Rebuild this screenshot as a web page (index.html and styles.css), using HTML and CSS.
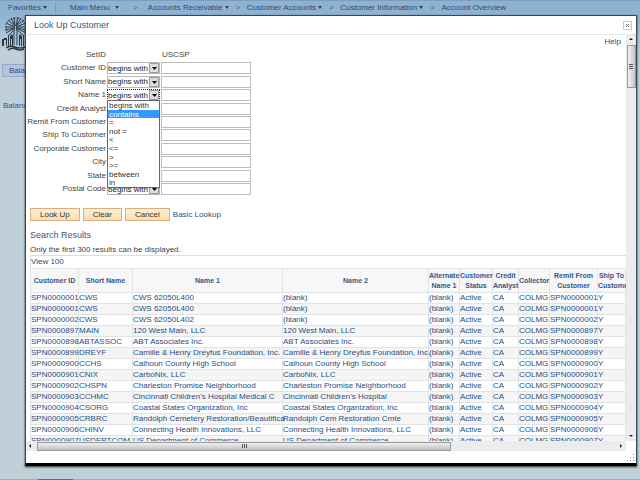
FILE: index.html
```
<!DOCTYPE html>
<html lang="en">
<head>
    <meta charset="UTF-8">
    <meta name="viewport" content="width=device-width, initial-scale=1.0">
    <title>Look Up Customer</title>
    <link rel="stylesheet" href="styles.css">
</head>
<body>
    <nav class="breadcrumbs">
        <a class="crumb favorites" href="#">Favorites <span class="caret"></span></a>
        <a class="crumb main-menu" href="#">Main Menu <span class="caret"></span></a>
        <span class="sep">&gt;</span>
        <a class="crumb" href="#">Accounts Receivable <span class="caret"></span></a>
        <span class="sep">&gt;</span>
        <a class="crumb" href="#">Customer Accounts <span class="caret"></span></a>
        <span class="sep">&gt;</span>
        <a class="crumb" href="#">Customer Information <span class="caret"></span></a>
        <span class="sep">&gt;</span>
        <a class="crumb" href="#">Account Overview</a>
    </nav>

    <div class="page-header">
        <svg class="logo" viewBox="0 0 28 36" aria-label="Logo">
            <g fill="none" stroke="#2b3947">
                <path d="M13 12L4 17M13 12L3 14M13 11L3 11M13 11L4 7M13 10L6 4M13 10L9 2M13 10L12 1M14 10L16 1M14 10L19 2M14 10L22 4M14 11L24 7M14 11L25 11M14 12L25 14M14 12L24 17M13 13L7 19M14 13L21 19"/>
                <path stroke-dasharray="1 1" d="M5 15Q1 5 10 3Q18 0 22 6Q26 11 22 16"/>
                <path d="M12 14V29M15 14V29"/>
                <path d="M4 32Q8 29 13 31T23 31M6 34Q10 31 14 33T22 33" stroke-width="1.5"/>
            </g>
            <path fill="#2b3947" d="M0 23h2v-1h3v8H4v-6H2v6H0zM6 19h1v11H6zM8 20l2-2 1 2v10h-1v-7H9v7H8zM17 20l1-2 2 2v10h-1v-7h-1v7h-1zM21 19h1v11h-1zM23 22h3v8h-1v-6h-1v6h-1z"/>
        </svg>
    </div>
    <a class="page-tab" href="#">Balances</a>
    <p class="page-label">Balance Group</p>
    <div class="page-footer"><span></span></div>

    <section class="modal" role="dialog" aria-labelledby="modalTitle">
        <header class="modal-header">
            <h1 id="modalTitle">Look Up Customer</h1>
            <button type="button" class="close" aria-label="Close"><svg viewBox="0 0 7 7"><path d="M2 2L5 5M5 2L2 5"/></svg></button>
        </header>

        <div class="modal-body">
            <div class="content">
                <a class="help" href="#">Help</a>

                <form class="lookup">
                    <div class="row">
                        <span class="name">SetID</span>
                        <span class="value">USCSP</span>
                    </div>
                    <div class="row">
                        <label for="customerId">Customer ID</label>
                        <select aria-label="Customer ID operator"><option>begins with</option></select>
                        <input type="text" id="customerId">
                    </div>
                    <div class="row">
                        <label for="shortName">Short Name</label>
                        <select aria-label="Short Name operator"><option>begins with</option></select>
                        <input type="text" id="shortName">
                    </div>
                    <div class="row">
                        <label for="name1">Name 1</label>
                        <div class="picker">
                            <select class="open" aria-label="Name 1 operator"><option>begins with</option></select>
                            <ul class="options">
                                <li>begins with</li>
                                <li class="active">contains</li>
                                <li>=</li>
                                <li>not =</li>
                                <li>&lt;</li>
                                <li>&lt;=</li>
                                <li>&gt;</li>
                                <li>&gt;=</li>
                                <li>between</li>
                                <li>in</li>
                            </ul>
                        </div>
                        <input type="text" id="name1">
                    </div>
                    <div class="row">
                        <label for="creditAnalyst">Credit Analyst</label>
                        <select aria-label="Credit Analyst operator"><option></option></select>
                        <input type="text" id="creditAnalyst">
                    </div>
                    <div class="row">
                        <label for="remitFrom">Remit From Customer</label>
                        <select aria-label="Remit From operator"><option></option></select>
                        <input type="text" id="remitFrom">
                    </div>
                    <div class="row">
                        <label for="shipTo">Ship To Customer</label>
                        <select aria-label="Ship To operator"><option></option></select>
                        <input type="text" id="shipTo">
                    </div>
                    <div class="row">
                        <label for="corporate">Corporate Customer</label>
                        <select aria-label="Corporate operator"><option></option></select>
                        <input type="text" id="corporate">
                    </div>
                    <div class="row">
                        <label for="city">City</label>
                        <select aria-label="City operator"><option></option></select>
                        <input type="text" id="city">
                    </div>
                    <div class="row">
                        <label for="state">State</label>
                        <select aria-label="State operator"><option></option></select>
                        <input type="text" id="state">
                    </div>
                    <div class="row">
                        <label for="postal">Postal Code</label>
                        <select aria-label="Postal Code operator"><option>begins with</option></select>
                        <input type="text" id="postal">
                    </div>
                </form>

                <div class="button-group">
                    <button type="button" class="btn">Look Up</button>
                    <button type="button" class="btn">Clear</button>
                    <button type="button" class="btn">Cancel</button>
                    <a href="#">Basic Lookup</a>
                </div>

                <h2>Search Results</h2>
                <p class="note">Only the first 300 results can be displayed.</p>
                <div class="view"><a href="#">View 100</a></div>

                <table class="results">
                    <colgroup>
                        <col class="c-id"><col class="c-short"><col class="c-name1"><col class="c-name2"><col class="c-alt">
                        <col class="c-status"><col class="c-credit"><col class="c-collector"><col class="c-remit"><col class="c-ship">
                    </colgroup>
                    <thead>
                        <tr><th>Customer ID</th><th>Short Name</th><th>Name 1</th><th>Name 2</th><th>Alternate<br>Name 1</th><th>Customer<br>Status</th><th>Credit<br>Analyst</th><th>Collector</th><th>Remit From<br>Customer</th><th>Ship To<br>Customer</th></tr>
                    </thead>
                    <tbody id="rows"></tbody>
                </table>
            </div>

            <div class="vscroll">
                <span class="arrow up"></span>
                <span class="thumb"></span>
                <span class="arrow down"></span>
            </div>
            <div class="hscroll">
                <span class="arrow left"></span>
                <span class="thumb"></span>
                <span class="arrow right"></span>
            </div>
        </div>
        <footer class="modal-footer">
            <svg class="grip" viewBox="0 0 8 8"><path d="M6 0h1v1h-1zM3 3h1v1h-1zM6 3h1v1h-1zM0 6h1v1h-1zM3 6h1v1h-1zM6 6h1v1h-1z"/></svg>
        </footer>
    </section>

    <script src="script.js"></script>
</body>
</html>
```
FILE: styles.css
```
* {
    box-sizing: border-box;
}
body {
    margin: 0;
    height: 100vh;
    overflow: hidden;
    position: relative;
    display: flex;
    flex-direction: column;
    font-family: "Liberation Sans", Arial, sans-serif;
    font-size: 8px;
    line-height: 10px;
    background-color: #bfd0d9;
    color: #444;
}
a {
    color: #1d4f86;
    text-decoration: none;
}
h1, h2, p, ul {
    margin: 0;
    padding: 0;
    font-weight: normal;
}

/* page behind the dialog */
.breadcrumbs {
    display: flex;
    align-items: center;
    height: 14px;
    flex: none;
    background-color: #8fb2d1;
    border-top: 1px solid #7b9fc2;
}
.crumb {
    color: #2f4a72;
    white-space: nowrap;
}
.favorites {
    width: 56px;
    padding-left: 8px;
    border-right: 1px solid #7799ba;
}
.main-menu {
    padding-left: 14px;
}
.caret {
    display: inline-block;
    border: 2px solid transparent;
    border-top: 3px solid #2f4157;
    border-bottom: 0;
    vertical-align: 1px;
}
.main-menu .caret {
    margin-left: 3px;
}
.sep {
    width: 18px;
    text-align: center;
    color: #40618a;
}
.main-menu + .sep {
    width: 29px;
    padding-left: 4px;
}
.page-header {
    height: 38px;
    flex: none;
    padding: 2px 0 0 2px;
    background: linear-gradient(#8fb2d1, #bfd0d9);
}
.logo {
    display: block;
    width: 28px;
    height: 36px;
}
.page-tab {
    margin: 12px 0 0 2px;
    height: 13px;
    width: 60px;
    padding: 1px 6px;
    border: 1px solid #98a9c5;
    background-color: #b4c4dc;
    color: #2a4a80;
}
.page-label {
    margin: 24px 0 0 3px;
    color: #1f5590;
}
.page-footer {
    margin-top: auto;
    height: 1px;
    padding-left: 38px;
    background-color: #9fa9b8;
}
.page-footer span {
    display: block;
    width: 35px;
    height: 1px;
    background-color: #5c6a80;
}

/* lookup dialog */
.modal {
    position: absolute;
    inset: 15px 3px 14px 25px;
    display: flex;
    flex-direction: column;
    background-color: #fff;
    border: 1px solid #3c4650;
    border-bottom: 3px solid #000;
    box-shadow: 0 1px 2px #222;
}
.modal-header {
    display: flex;
    align-items: center;
    justify-content: space-between;
    height: 19px;
    flex: none;
    padding: 0 4px 0 8px;
    border-bottom: 1px solid #dfe7e7;
}
h1, h2 {
    font-size: 9px;
    line-height: 12px;
    color: #35568c;
}
.close {
    width: 9px;
    height: 9px;
    padding: 0;
    border: 1px solid #c4cad0;
    background-color: #fff;
}
.close svg {
    display: block;
    width: 7px;
    height: 7px;
}
.close path {
    stroke: #66768a;
    fill: none;
}
.modal-body {
    flex: 1;
    min-height: 0;
    display: grid;
    grid-template-columns: 1fr 10px;
    grid-template-rows: 1fr 10px;
}
.content {
    overflow: hidden;
    padding-left: 4px;
}
.help {
    display: block;
    padding: 1px 5px 0 0;
    text-align: right;
    line-height: 11px;
}
.lookup {
    display: flex;
    flex-direction: column;
    height: 148px;
    margin-top: 1px;
}
.row {
    flex: 1;
    display: flex;
    align-items: center;
}
.row label,
.row .name {
    display: flex;
    justify-content: flex-end;
    width: 76px;
    white-space: nowrap;
}
.row .value {
    margin-left: 56px;
}
.row select {
    appearance: none;
    display: block;
    width: 53px;
    height: 12px;
    margin-left: 1px;
    padding: 0;
    border: 1px solid #b8b8b8;
    border-radius: 0;
    font: 8px "Liberation Sans", Arial, sans-serif;
    color: #222;
    background: #fff url("data:image/svg+xml,%3Csvg xmlns='http://www.w3.org/2000/svg' width='10' height='10'%3E%3Cpath fill='%23ddd' stroke='%23999' d='M.5 .5h9v9h-9z'/%3E%3Cpath d='M3 4h5L5.5 7z'/%3E%3C/svg%3E") right center no-repeat;
}
.row input {
    width: 90px;
    height: 12px;
    margin-left: 1px;
    padding: 0 2px;
    border: 1px solid #bdbdbd;
    font: 8px "Liberation Sans", Arial, sans-serif;
}
.picker {
    position: relative;
}
.row select.open {
    border: 1px dotted #222;
}
.options {
    position: absolute;
    top: 11px;
    left: 1px;
    display: flex;
    flex-direction: column;
    width: 53px;
    height: 88px;
    list-style: none;
    border: 1px solid #667;
    background-color: #fff;
    color: #333;
}
.options li {
    flex: 1;
    min-height: 0;
    padding-left: 1px;
    line-height: 9px;
}
.options .active {
    background-color: #3399ff;
    color: #fff;
}
.button-group {
    display: flex;
    align-items: center;
    gap: 3px;
    margin-top: 12px;
}
.btn {
    height: 13px;
    padding: 0 9px;
    border: 1px solid #dcae84;
    background: linear-gradient(#fdf0d4, #f7dfb0);
    font: 8px "Liberation Sans", Arial, sans-serif;
    color: #333;
}
h2 {
    margin-top: 8px;
}
.note {
    margin-top: 4px;
}
.view {
    height: 13px;
    padding-top: 1px;
    border: 1px solid #ddd;
    border-width: 1px 0 0 1px;
}
.results {
    table-layout: fixed;
    width: 100%;
    border-collapse: collapse;
    color: #1d4f86;
}
.results th,
.results td {
    padding: 0;
    border: 1px solid #e3e3e3;
    white-space: nowrap;
}
.results th {
    height: 24px;
    background-color: #f7f7f7;
    font-size: 7px;
    color: #35568c;
}
.results td {
    height: 11px;
    line-height: 10px;
}
.results tr:nth-child(even) td {
    background-color: #f5f5f5;
}
.c-id { width: 48px; }
.c-short { width: 54px; }
.c-name1 { width: 150px; }
.c-alt { width: 31px; }
.c-status { width: 33px; }
.c-credit { width: 26px; }
.c-collector { width: 31px; }
.c-remit { width: 48px; }
.c-ship { width: 28px; }

/* scroll bars */
.vscroll,
.hscroll {
    display: flex;
    align-items: center;
    background-color: #ececec;
}
.vscroll {
    flex-direction: column;
}
.vscroll .thumb {
    width: 9px;
    height: 43px;
    margin-top: 5px;
    border: 1px solid #999;
    background: repeating-linear-gradient(#555 0 1px, #ddd 1px 2px) center / 4px 5px no-repeat, linear-gradient(90deg, #f2f2f2, #c4c4c4);
}
.hscroll .thumb {
    width: 69%;
    height: 9px;
    margin-left: 6px;
    border: 1px solid #999;
    background: repeating-linear-gradient(90deg, #555 0 1px, #ddd 1px 2px) center / 5px 4px no-repeat, linear-gradient(#f0f0f0, #c0c0c0);
}
.arrow {
    border: 2px solid transparent;
}
.up {
    margin-top: 3px;
    border-top: 0;
    border-bottom-color: #222;
}
.down {
    margin: auto 0 4px;
    border-bottom: 0;
    border-top-color: #222;
}
.left {
    margin-left: 3px;
    border-left: 0;
    border-right-color: #222;
}
.right {
    margin: 0 4px 0 auto;
    border-right: 0;
    border-left-color: #222;
}
.modal-footer {
    height: 12px;
    flex: none;
    display: flex;
    align-items: flex-end;
    justify-content: flex-end;
    padding: 1px;
}
.grip {
    width: 8px;
    height: 8px;
    fill: #888;
}
```
FILE: script.js
```
const rows = [
    ['SPN0000001', 'CWS', 'CWS 62050L400', '(blank)'],
    ['SPN0000001', 'CWS', 'CWS 62050L400', '(blank)'],
    ['SPN0000002', 'CWS', 'CWS 62050L402', '(blank)'],
    ['SPN0000897', 'MAIN', '120 West Main, LLC', '120 West Main, LLC'],
    ['SPN0000898', 'ABTASSOC', 'ABT Associates Inc.', 'ABT Associates Inc.'],
    ['SPN0000899', 'DREYF', 'Camille & Henry Dreyfus Foundation, Inc.', 'Camille & Henry Dreyfus Foundation, Inc.'],
    ['SPN0000900', 'CCHS', 'Calhoun County High School', 'Calhoun County High School'],
    ['SPN0000901', 'CNIX', 'CarboNix, LLC', 'CarboNix, LLC'],
    ['SPN0000902', 'CHSPN', 'Charleston Promise Neighborhood', 'Charleston Promise Neighborhood'],
    ['SPN0000903', 'CCHMC', 'Cincinnati Children\'s Hospital Medical C', 'Cincinnati Children\'s Hospital'],
    ['SPN0000904', 'CSORG', 'Coastal States Organization, Inc', 'Coastal States Organization, Inc'],
    ['SPN0000905', 'CRBRC', 'Randolph Cemetery Restoration/Beautifica', 'Randolph Cem Restoration Cmte'],
    ['SPN0000906', 'CHINV', 'Connecting Health Innovations, LLC', 'Connecting Health Innovations, LLC'],
    ['SPN0000907', 'USDEPTCOM', 'US Department of Commerce', 'US Department of Commerce']
];

const body = document.getElementById('rows');
rows.forEach(function(row) {
    const tr = body.insertRow();
    row.concat(['(blank)', 'Active', 'CA', 'COLMG', row[0], 'Y']).forEach(function(text) {
        const link = document.createElement('a');
        link.href = '#';
        link.textContent = text;
        tr.insertCell().appendChild(link);
    });
});
```
